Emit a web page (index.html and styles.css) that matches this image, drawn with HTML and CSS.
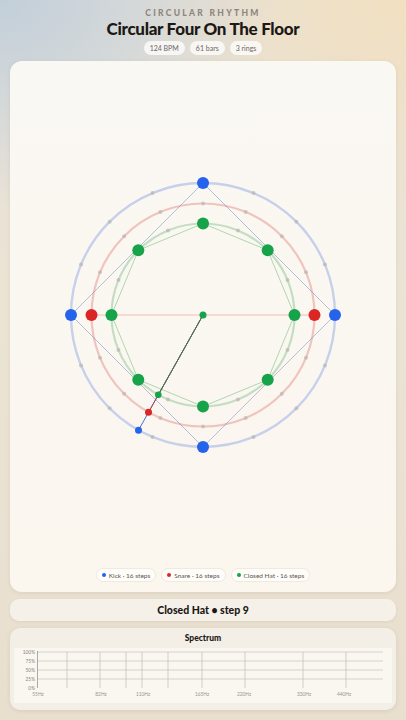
FILE: index.html
```html
<!DOCTYPE html>
<html>
<head>
<meta charset="utf-8">
<link rel="stylesheet" href="styles.css">
</head>
<body>
<div class="page">
  <header class="header">
    <div class="eyebrow">CIRCULAR RHYTHM</div>
    <h1 class="title">Circular Four On The Floor</h1>
    <div class="chips">
      <span class="chip">124 BPM</span>
      <span class="chip">61 bars</span>
      <span class="chip">3 rings</span>
    </div>
  </header>

  <section class="card">
    <svg class="wheel" width="386" height="500" viewBox="0 0 386 500">
      <!-- rings -->
      <circle cx="193" cy="254" r="132" class="ring ring-kick"/>
      <circle cx="193" cy="254" r="111.5" class="ring ring-snare"/>
      <circle cx="193" cy="254" r="91.5" class="ring ring-hat"/>

      <!-- step markers -->
      <g class="marks">
        <circle cx="243.5" cy="132.05" r="2"/><circle cx="286.34" cy="160.66" r="2"/><circle cx="314.95" cy="203.49" r="2"/>
        <circle cx="314.95" cy="304.51" r="2"/><circle cx="286.34" cy="347.34" r="2"/><circle cx="243.51" cy="375.95" r="2"/>
        <circle cx="142.49" cy="375.95" r="2"/><circle cx="99.66" cy="347.34" r="2"/><circle cx="71.05" cy="304.51" r="2"/>
        <circle cx="71.05" cy="203.49" r="2"/><circle cx="99.66" cy="160.66" r="2"/><circle cx="142.49" cy="132.05" r="2"/>

        <circle cx="193" cy="142.5" r="2"/><circle cx="235.67" cy="150.99" r="2"/><circle cx="271.84" cy="175.16" r="2"/><circle cx="296.01" cy="211.33" r="2"/>
        <circle cx="296.01" cy="296.67" r="2"/><circle cx="271.84" cy="332.84" r="2"/><circle cx="235.67" cy="357.01" r="2"/><circle cx="193" cy="365.5" r="2"/>
        <circle cx="150.33" cy="357.01" r="2"/><circle cx="114.16" cy="332.84" r="2"/><circle cx="89.99" cy="296.67" r="2"/>
        <circle cx="89.99" cy="211.33" r="2"/><circle cx="114.16" cy="175.16" r="2"/><circle cx="150.33" cy="150.99" r="2"/>

        <circle cx="228.02" cy="169.47" r="2"/><circle cx="277.53" cy="218.98" r="2"/><circle cx="277.53" cy="289.02" r="2"/><circle cx="228.02" cy="338.53" r="2"/>
        <circle cx="157.98" cy="338.53" r="2"/><circle cx="108.47" cy="289.02" r="2"/><circle cx="108.47" cy="218.98" r="2"/><circle cx="157.98" cy="169.47" r="2"/>
      </g>

      <!-- polygons -->
      <path class="poly poly-kick" d="M193 122 L325 254 L193 386 L61 254 Z"/>
      <line class="poly poly-snare" x1="81.5" y1="254" x2="304.5" y2="254"/>
      <polygon class="poly poly-hat" points="193,162.5 257.7,189.3 284.5,254 257.7,318.7 193,345.5 128.3,318.7 101.5,254 128.3,189.3"/>

      <!-- playhead -->
      <line class="hand hand-kick" x1="193" y1="254" x2="128.5" y2="369.17"/>
      <line class="hand hand-snare" x1="193" y1="254" x2="138.52" y2="351.28"/>
      <line class="hand hand-hat" x1="193" y1="254" x2="148.29" y2="333.83"/>

      <!-- hits -->
      <g class="kick">
        <circle cx="193" cy="122" r="6"/><circle cx="325" cy="254" r="6"/><circle cx="193" cy="386" r="6"/><circle cx="61" cy="254" r="6"/>
        <circle cx="128.5" cy="369.17" r="3.5"/>
      </g>
      <g class="snare">
        <circle cx="304.5" cy="254" r="6"/><circle cx="81.5" cy="254" r="6"/>
        <circle cx="138.52" cy="351.28" r="3.5"/>
      </g>
      <g class="hat">
        <circle cx="193" cy="162.5" r="6"/><circle cx="257.7" cy="189.3" r="6"/><circle cx="284.5" cy="254" r="6"/><circle cx="257.7" cy="318.7" r="6"/>
        <circle cx="193" cy="345.5" r="6"/><circle cx="128.3" cy="318.7" r="6"/><circle cx="101.5" cy="254" r="6"/><circle cx="128.3" cy="189.3" r="6"/>
        <circle cx="148.29" cy="333.83" r="3.3"/>
        <circle cx="193" cy="254" r="3.5"/>
      </g>
    </svg>
    <div class="legend">
      <span class="lchip"><i class="dot dot-kick"></i>Kick · 16 steps</span>
      <span class="lchip"><i class="dot dot-snare"></i>Snare · 16 steps</span>
      <span class="lchip"><i class="dot dot-hat"></i>Closed Hat · 16 steps</span>
    </div>
  </section>

  <div class="status">Closed Hat • step 9</div>

  <section class="spectrum">
    <div class="spec-title">Spectrum</div>
    <div class="chart">
      <svg width="376" height="55" viewBox="0 0 376 55">
        <defs>
          <linearGradient id="base" x1="0" x2="1" y1="0" y2="0">
            <stop offset="0" stop-color="#6f8fd6"/>
            <stop offset="0.5" stop-color="#a9a3a6"/>
            <stop offset="1" stop-color="#e0a25a"/>
          </linearGradient>
        </defs>
        <g class="hgrid">
          <line x1="23" y1="4" x2="369" y2="4"/>
          <line x1="23" y1="13" x2="369" y2="13"/>
          <line x1="23" y1="22" x2="369" y2="22"/>
          <line x1="23" y1="31" x2="369" y2="31"/>
        </g>
        <g class="vgrid">
          <line x1="53" y1="4" x2="53" y2="40"/>
          <line x1="86" y1="4" x2="86" y2="40"/>
          <line x1="112" y1="4" x2="112" y2="40"/>
          <line x1="128" y1="4" x2="128" y2="40"/>
          <line x1="154" y1="4" x2="154" y2="40"/>
          <line x1="188" y1="4" x2="188" y2="40"/>
          <line x1="231" y1="4" x2="231" y2="40"/>
          <line x1="289" y1="4" x2="289" y2="40"/>
          <line x1="332" y1="4" x2="332" y2="40"/>
        </g>
        <line class="axis" x1="23.5" y1="3" x2="23.5" y2="40"/>
        <line x1="23" y1="40" x2="369" y2="40" stroke="url(#base)" stroke-width="1.4"/>
        <g class="ylab">
          <text x="21" y="6">100%</text>
          <text x="21" y="15">75%</text>
          <text x="21" y="24">50%</text>
          <text x="21" y="33">25%</text>
          <text x="21" y="42">0%</text>
        </g>
        <g class="xlab">
          <text x="24" y="47.5">55Hz</text>
          <text x="87" y="47.5">82Hz</text>
          <text x="129" y="47.5">110Hz</text>
          <text x="188" y="47.5">165Hz</text>
          <text x="230" y="47.5">220Hz</text>
          <text x="290" y="47.5">330Hz</text>
          <text x="330" y="47.5">440Hz</text>
        </g>
      </svg>
    </div>
  </section>
</div>
</body>
</html>
```

FILE: styles.css
```css
* { box-sizing: border-box; }
html, body { margin: 0; padding: 0; }
body {
  width: 406px;
  height: 720px;
  overflow: hidden;
  font-family: Lato, "Noto Sans", sans-serif;
  background:
    radial-gradient(ellipse 280px 210px at 0px 0px, rgba(194, 207, 218, 1), rgba(194, 207, 218, 0) 100%),
    radial-gradient(ellipse 300px 230px at 406px 0px, rgba(242, 224, 192, 1), rgba(242, 224, 192, 0) 100%),
    linear-gradient(180deg, #e7e2d9 0%, #ebe3d4 40%, #e8dfcf 100%);
}
.page {
  display: flex;
  flex-direction: column;
  height: 720px;
}
.header {
  height: 61px;
  padding-top: 8px;
  text-align: center;
}
.eyebrow {
  font-size: 8.5px;
  line-height: 10px;
  font-weight: 900;
  letter-spacing: 2.3px;
  color: #8e857d;
}
.title {
  margin: 1px 0 0;
  font-size: 17px;
  line-height: 20px;
  font-weight: 900;
  letter-spacing: -0.3px;
  color: #1c1815;
}
.chips {
  display: flex;
  justify-content: center;
  gap: 5px;
  margin-top: 2px;
}
.chip {
  height: 14px;
  padding: 0 6px;
  border-radius: 7px;
  background: rgba(255, 255, 255, 0.75);
  font-size: 7px;
  line-height: 14px;
  color: #6d665f;
}
.card {
  margin: 0 10px;
  height: 531px;
  border-radius: 12px;
  background: linear-gradient(180deg, #faf8f3 0%, #fbf6ee 100%);
  box-shadow: 0 1px 4px rgba(120, 100, 70, 0.12);
  display: flex;
  flex-direction: column;
  align-items: center;
}
.wheel { display: block; }
.ring { fill: none; }
.ring-kick { stroke: #c7d0ea; stroke-width: 2.4; }
.ring-snare { stroke: #f0c4be; stroke-width: 2.2; }
.ring-hat { stroke: #c3dec3; stroke-width: 2.2; }
.marks circle { fill: #b9b6b2; opacity: 0.7; }
.poly { fill: none; stroke-width: 0.9; }
.poly-kick { stroke: rgba(110, 130, 200, 0.55); stroke-width: 0.9; }
.poly-snare { stroke: #f0b4ae; }
.poly-hat { stroke: #a6d2a8; }
.hand { stroke-width: 1; }
.hand-kick { stroke: #4b6fd0; }
.hand-snare { stroke: #b0474a; }
.hand-hat { stroke: #3a7a4c; }
.kick circle { fill: #2563eb; }
.snare circle { fill: #dc2626; }
.hat circle { fill: #16a34a; }
.legend {
  display: flex;
  gap: 5px;
  margin-top: 7px;
}
.lchip {
  display: flex;
  align-items: center;
  gap: 3px;
  height: 14px;
  padding: 0 5px;
  border-radius: 7px;
  background: #fffdf9;
  border: 0.5px solid #efe9e0;
  font-size: 6.5px;
  color: #5b554f;
}
.dot {
  width: 4px;
  height: 4px;
  border-radius: 50%;
  display: block;
}
.dot-kick { background: #2563eb; }
.dot-snare { background: #dc2626; }
.dot-hat { background: #16a34a; }
.status {
  margin: 7px 10px 0;
  height: 22px;
  border-radius: 9px;
  background: #f6f1e8;
  box-shadow: 0 1px 3px rgba(120, 100, 70, 0.1);
  text-align: center;
  font-size: 10.5px;
  line-height: 22px;
  font-weight: 900;
  color: #1c1815;
}
.spectrum {
  margin: 7px 10px 0;
  height: 82px;
  border-radius: 10px;
  background: #f4efe6;
  box-shadow: 0 1px 4px rgba(120, 100, 70, 0.14);
  padding: 4px 6px 0;
}
.spec-title {
  text-align: center;
  font-size: 8.5px;
  line-height: 12px;
  font-weight: 900;
  color: #1c1815;
}
.chart {
  margin: 4px -2px 0;
  height: 55px;
  background: #faf6f0;
}
.chart svg { display: block; }
.hgrid line { stroke: #cfc9c1; stroke-width: 0.8; }
.vgrid line { stroke: #c2bab1; stroke-width: 0.7; }
.axis { stroke: #9a9590; stroke-width: 0.8; }
.ylab text {
  font-size: 4.8px;
  fill: #8a847e;
  text-anchor: end;
  font-family: Lato, sans-serif;
}
.xlab text {
  font-size: 4.8px;
  fill: #9a948e;
  text-anchor: middle;
  font-family: Lato, sans-serif;
}
```
